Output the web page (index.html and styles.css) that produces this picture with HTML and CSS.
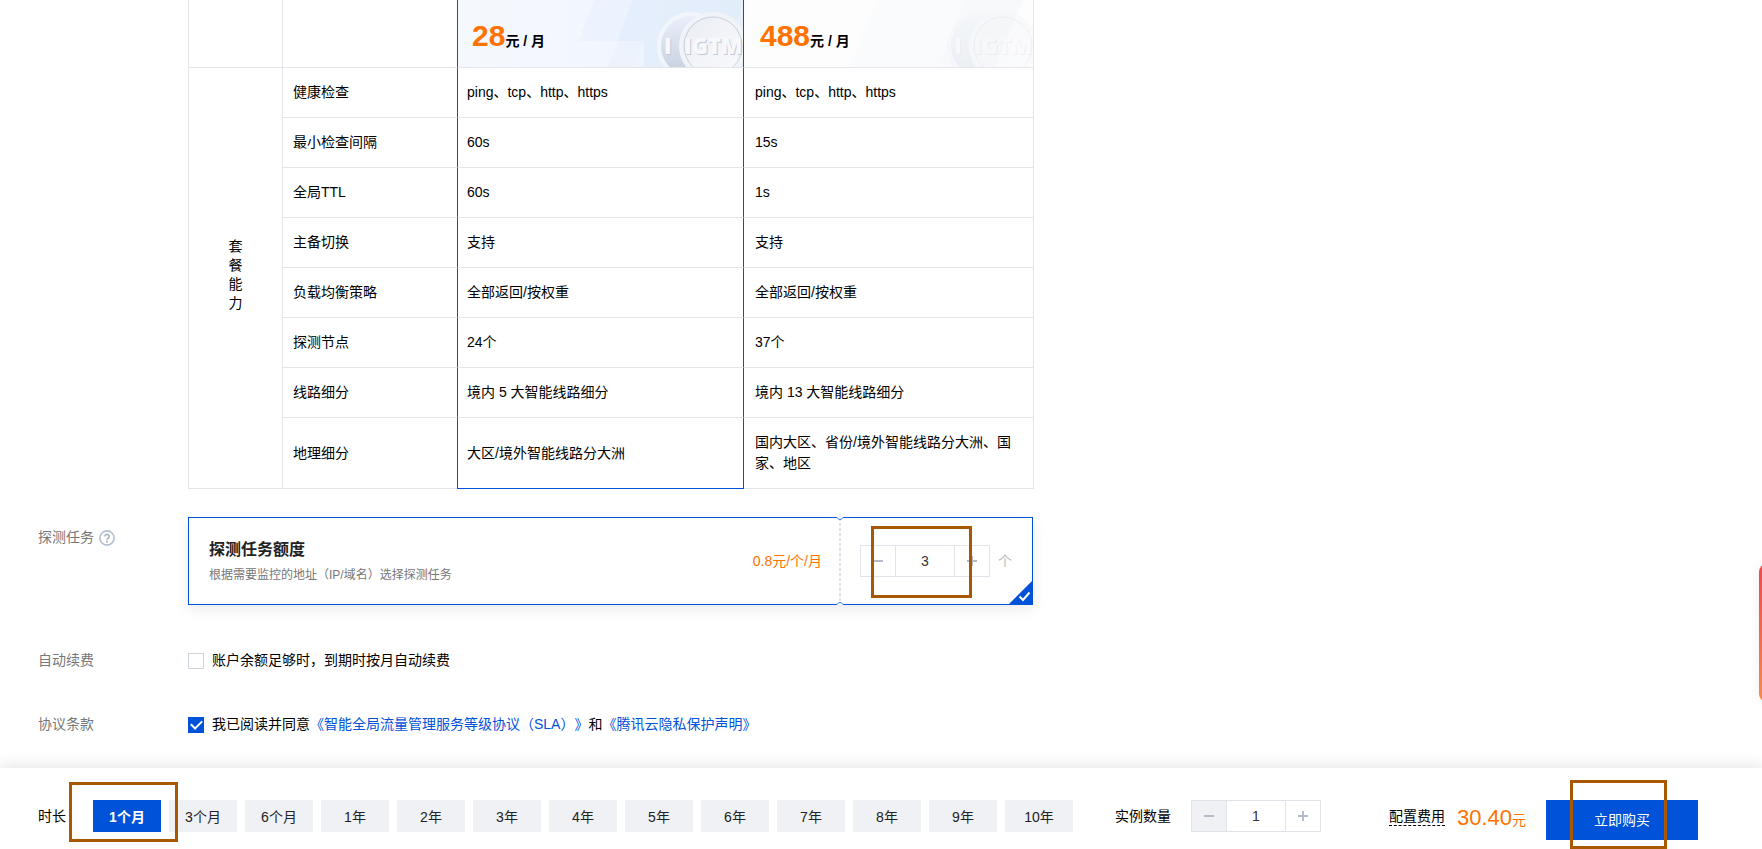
FILE: index.html
```html
<!DOCTYPE html>
<html lang="zh-CN">
<head>
<meta charset="utf-8">
<title>智能全局流量管理</title>
<link rel="stylesheet" href="styles.css">
</head>
<body>
<main class="content">
  <table class="plans">
    <colgroup><col class="col-group"><col class="col-name"><col class="col-plan"><col></colgroup>
    <thead>
      <tr>
        <th></th>
        <th class="head-name"><span class="head-label">价</span></th>
        <th class="price-cell selected">
          <svg class="price-art" viewBox="0 0 286 67" preserveAspectRatio="xMaxYMax slice" aria-hidden="true">
            <defs>
              <linearGradient id="sky" x1="0" x2="1"><stop offset="0" stop-color="#f5f8fd"/><stop offset=".5" stop-color="#f2f6fe"/><stop offset="1" stop-color="#e6effb"/></linearGradient>
              <linearGradient id="coin" x1="0" y1="0" x2="1" y2="1"><stop offset="0" stop-color="#e9ecf3"/><stop offset="1" stop-color="#fafbfd"/></linearGradient>
              <linearGradient id="back" x1="0" y1="0" x2="0" y2="1"><stop offset="0" stop-color="#eaf0fa"/><stop offset="1" stop-color="#c5cddd"/></linearGradient>
              <g id="coins">
                <circle cx="234" cy="46" r="32" fill="url(#back)" stroke="#f2f5fa" stroke-width="4"/>
                <text x="208" y="55" class="coin-shadow">I</text>
                <text x="207" y="54" class="coin-text">I</text>
                <circle cx="256" cy="46" r="32" fill="url(#coin)" stroke="#f0f3f8" stroke-width="4"/>
                <circle cx="256" cy="46" r="29" fill="none" stroke="#c9cfdb"/>
                <text x="228" y="55" class="coin-shadow">IGTM</text>
                <text x="227" y="54" class="coin-text">IGTM</text>
              </g>
            </defs>
            <rect width="286" height="67" fill="url(#sky)"/>
            <path d="M137 0H204L187 41H122Z" fill="#e9f1fe" opacity=".7"/>
            <path d="M176 0H286L278 30L258 67H187L187 41H160Z" fill="#e0ebfa" opacity=".6"/>
            <path d="M162 41H187L176 67H151Z" fill="#edf3fd"/>
            <use href="#coins"/>
          </svg>
          <span class="price"><b>28</b>元 / 月</span>
        </th>
        <th class="price-cell">
          <svg class="price-art" viewBox="0 0 290 67" preserveAspectRatio="xMaxYMax slice" aria-hidden="true">
            <rect width="290" height="67" fill="#fdfdfe"/>
            <path d="M134 0H222L194 67H106Z" fill="#fafbfc"/>
            <path d="M222 0H280L252 67H194Z" fill="#f7f9fa"/>
            <use href="#coins" x="4" opacity=".25"/>
          </svg>
          <span class="price"><b>488</b>元 / 月</span>
        </th>
      </tr>
    </thead>
    <tbody>
      <tr><th class="group" rowspan="8"><span>套餐能力</span></th><th>健康检查</th><td class="selected">ping、tcp、http、https</td><td>ping、tcp、http、https</td></tr>
      <tr><th>最小检查间隔</th><td class="selected">60s</td><td>15s</td></tr>
      <tr><th>全局TTL</th><td class="selected">60s</td><td>1s</td></tr>
      <tr><th>主备切换</th><td class="selected">支持</td><td>支持</td></tr>
      <tr><th>负载均衡策略</th><td class="selected">全部返回/按权重</td><td>全部返回/按权重</td></tr>
      <tr><th>探测节点</th><td class="selected">24个</td><td>37个</td></tr>
      <tr><th>线路细分</th><td class="selected">境内 5 大智能线路细分</td><td>境内 13 大智能线路细分</td></tr>
      <tr><th>地理细分</th><td class="selected last">大区/境外智能线路分大洲</td><td>国内大区、省份/境外智能线路分大洲、国家、地区</td></tr>
    </tbody>
  </table>

  <div class="row row-quota">
    <div class="row-label">探测任务
      <svg class="help" viewBox="0 0 16 16" aria-hidden="true"><circle cx="8" cy="8" r="7.1" fill="none" stroke="#b4bfcf" stroke-width="1.7"/><path d="M5.8 6.4a2.2 2.1 0 1 1 3.4 1.8C8.4 8.700 8 9 8 9.800" fill="none" stroke="#a3afc1" stroke-width="1.6"/><circle cx="8" cy="11.700" r="1" fill="#a3afc1"/></svg>
    </div>
    <section class="quota">
      <div class="quota-info">
        <div>
          <h2>探测任务额度</h2>
          <p>根据需要监控的地址（IP/域名）选择探测任务</p>
        </div>
        <span class="unit-price">0.8元/个/月</span>
      </div>
      <div class="quota-count">
        <div class="stepper">
          <button type="button" class="minus" aria-label="减少任务"></button>
          <input type="text" value="3" aria-label="探测任务数量">
          <button type="button" class="plus" aria-label="增加任务"></button>
        </div>
        <span class="unit">个</span>
        <span class="mark mark-count"></span>
      </div>
      <svg class="notch notch-top" viewBox="0 0 8 4" aria-hidden="true"><path d="M0 0H8V.5C6 .5 6 2.500 4 2.500S2 .5 0 .5Z" fill="#fff"/><path d="M0 .5C2 .5 2 2.500 4 2.500S6 .5 8 .5" fill="none" stroke="#2b70e0"/></svg>
      <svg class="notch notch-bottom" viewBox="0 0 8 4" aria-hidden="true"><path d="M0 4H8V3.500C6 3.500 6 1.500 4 1.500S2 3.500 0 3.500Z" fill="#fff"/><path d="M0 3.500C2 3.500 2 1.500 4 1.500S6 3.500 8 3.500" fill="none" stroke="#2b70e0"/></svg>
      <svg class="corner" viewBox="0 0 25 25" aria-hidden="true"><path d="M25 0V25H0Z" fill="#0052d9"/><path d="M11.500 16.500L15 20L21.500 12.500" fill="none" stroke="#fff" stroke-width="2"/></svg>
    </section>
  </div>

  <div class="row row-renew">
    <div class="row-label">自动续费</div>
    <label class="check"><input type="checkbox">账户余额足够时，到期时按月自动续费</label>
  </div>

  <div class="row row-terms">
    <div class="row-label">协议条款</div>
    <div class="check"><input type="checkbox" id="agree" checked><span><label for="agree">我已阅读并同意</label><a href="#sla">《智能全局流量管理服务等级协议（SLA）》</a>和<a href="#privacy">《腾讯云隐私保护声明》</a></span></div>
  </div>
</main>

<aside class="side-tab"></aside>

<footer class="bar">
  <span class="bar-label">时长</span>
  <div class="durations">
    <button type="button" class="active">1个月</button>
    <button type="button">3个月</button>
    <button type="button">6个月</button>
    <button type="button">1年</button>
    <button type="button">2年</button>
    <button type="button">3年</button>
    <button type="button">4年</button>
    <button type="button">5年</button>
    <button type="button">6年</button>
    <button type="button">7年</button>
    <button type="button">8年</button>
    <button type="button">9年</button>
    <button type="button">10年</button>
    <span class="mark mark-duration"></span>
  </div>
  <label class="bar-label" for="instances">实例数量</label>
  <div class="stepper">
    <button type="button" class="minus" aria-label="减少实例" disabled></button>
    <input type="text" id="instances" value="1">
    <button type="button" class="plus" aria-label="增加实例"></button>
  </div>
  <div class="checkout">
    <span class="fee-label">配置费用</span>
    <span class="fee"><b>30.40</b>元</span>
    <div class="buy-wrap">
      <button type="button" class="buy">立即购买</button>
      <span class="mark mark-buy"></span>
    </div>
  </div>
</footer>
</body>
</html>
```

FILE: styles.css
```css
* { box-sizing: border-box; }

body {
  margin: 0;
  min-height: 100vh;
  display: flex;
  flex-direction: column;
  overflow: hidden;
  background: #fff;
  color: #000;
  font: 14px/21px "Liberation Sans", "Noto Sans CJK SC", sans-serif;
  text-spacing-trim: space-all;
}

button, input { font: inherit; color: inherit; margin: 0; }
a { color: #0052d9; text-decoration: none; }

.content { flex: 1; padding: 0 38px; }

/* plan comparison */
.plans {
  width: 846px;
  margin-left: 150px;
  border-collapse: separate;
  border-spacing: 0;
  table-layout: fixed;
  border-left: 1px solid #e3e5ea;
}
.col-group { width: 94px; }
.col-name { width: 174px; }
.col-plan { width: 287px; }
.plans th, .plans td {
  height: 50px;
  padding: 14px 10px;
  border: solid #e3e5ea;
  border-width: 0 1px 1px 0;
  font-weight: 400;
  text-align: left;
  vertical-align: middle;
}
.plans td { padding: 14px 11px; }
.plans td.selected { padding: 14px 9px; }
.plans tbody tr:last-child > * { height: 71px; }
.plans .selected { border-right-color: #0052d9; border-left: 1px solid #0052d9; }
.plans .last { border-bottom-color: #0052d9; }
.plans th:has(+ .selected) { border-right: 0; }
.plans thead th { height: 68px; padding: 0; }
.plans .group { padding: 0 0 6px; }
.group span {
  display: block;
  width: 14px;
  margin: 0 auto;
  line-height: 19px;
  word-break: break-all;
}
.plans .head-name { position: relative; }
.head-label {
  position: absolute;
  left: 39px;
  top: -17px;
}
.price-cell { position: relative; }
.price-art { position: absolute; inset: 0; width: 100%; height: 100%; }
.price {
  position: relative;
  display: block;
  padding: 4px 16px 0;
  font-weight: 700;
  white-space: nowrap;
}
.selected .price { padding-left: 14px; }
.price b { color: #ff7200; font-size: 30px; line-height: 36px; }
.coin-text, .coin-shadow { font: 800 22px "Open Sans", sans-serif; fill: #f6f8fb; }
.coin-shadow { fill: #c3c9d7; }

/* form rows */
.row { display: grid; grid-template-columns: 150px minmax(0, 845px); }
.row-quota { margin-top: 28px; }
.row-quota .row-label { padding-top: 10px; }
.row-renew { margin-top: 45px; }
.row-terms { margin-top: 43px; }
.row-label { display: flex; align-items: flex-start; gap: 5px; color: #777; }
.help { width: 16px; height: 16px; margin-top: 3px; }

.check { display: flex; align-items: center; gap: 8px; }
.check input {
  appearance: none;
  width: 16px;
  height: 16px;
  border: 1px solid #cfd5de;
  background: #fff;
}
.check input:checked { border-color: #0052d9; background: #0052d9; display: grid; place-items: center; }
.check input:checked::after {
  content: "";
  width: 9px;
  height: 5px;
  border: solid #fff;
  border-width: 0 0 2px 2px;
  rotate: -45deg;
  margin-bottom: 3px;
}

.quota {
  position: relative;
  display: flex;
  height: 88px;
  border: 1px solid #0052d9;
  background: #fff;
  box-shadow: 0 4px 12px rgba(54, 58, 100, .1);
}
.quota-info {
  flex: 1;
  display: flex;
  align-items: center;
  justify-content: space-between;
  padding: 0 17px 0 20px;
}
.quota h2 { margin: 0; font-size: 16px; line-height: 24px; color: #222; }
.quota p { margin: 4px 0 0; font-size: 12px; line-height: 18px; color: #777; }
.unit-price { color: #ff7200; }
.quota-count {
  position: relative;
  display: flex;
  align-items: center;
  gap: 8px;
  width: 193px;
  padding-left: 21px;
  background: repeating-linear-gradient(#e0e2e8 0 3px, transparent 3px 5px) 0 0 / 2px 100% no-repeat;
}
.unit { color: #bbb; }
.notch { position: absolute; right: 188px; width: 8px; height: 4px; }
.notch-top { top: -1px; }
.notch-bottom { bottom: -1px; }
.corner { position: absolute; right: -1px; bottom: -1px; width: 25px; height: 25px; }

.stepper { display: flex; width: 130px; height: 32px; border: 1px solid #e0e3ea; background: #fff; }
.stepper input {
  flex: 1;
  min-width: 0;
  padding: 0;
  border: solid #e0e3ea;
  border-width: 0 1px;
  background: none;
  color: #333;
  text-align: center;
}
.stepper button {
  width: 34px;
  padding: 0;
  border: 0;
  background: linear-gradient(#b4bccb, #b4bccb) center / 10px 2px no-repeat;
}
.stepper .plus {
  background:
    linear-gradient(#b4bccb, #b4bccb) center / 10px 2px no-repeat,
    linear-gradient(#b4bccb, #b4bccb) center / 2px 10px no-repeat;
}
.stepper button:disabled { background-color: #f0f1f5; }

/* annotation frames drawn over the controls */
.mark { position: absolute; border: 3px solid #a85800; pointer-events: none; }
.mark-count { left: 32px; top: 8px; width: 101px; height: 72px; }
.mark-duration { left: -24px; top: -18px; width: 109px; height: 60px; }
.mark-buy { left: 24px; top: -20px; width: 97px; height: 69px; }

.side-tab {
  position: fixed;
  right: -45px;
  top: 564px;
  width: 48px;
  height: 138px;
  border-radius: 8px;
  background: linear-gradient(#f2464b, #fb8a4b);
  box-shadow: 0 0 12px rgba(54, 58, 80, .08);
}

/* purchase bar */
.bar {
  position: relative;
  display: flex;
  align-items: flex-start;
  height: 81px;
  padding: 32px 64px 0 38px;
  background: #fff;
  box-shadow: 0 -2px 14px rgba(54, 58, 80, .14);
}
.bar-label { line-height: 32px; white-space: nowrap; }
.durations { position: relative; display: flex; gap: 8px; margin: 0 42px 0 27px; }
.durations button {
  width: 68px;
  height: 32px;
  padding: 2px 0 0;
  border: 0;
  background: #f0f1f5;
  color: #222;
}
.durations .active { background: #0052d9; color: #fff; font-weight: 700; }
.bar .stepper { margin-left: 20px; }
.checkout { display: flex; margin-left: auto; white-space: nowrap; }
.fee-label { height: 26px; padding-top: 7px; line-height: 19px; border-bottom: 1px dashed #000; }
.fee { margin: 0 20px 0 12px; line-height: 35px; color: #ff7200; }
.fee b { font-weight: 400; font-size: 22px; }
.buy-wrap { position: relative; }
.buy {
  width: 152px;
  height: 40px;
  padding: 0;
  border: 0;
  background: #0052d9;
  color: #fff;
}
```
